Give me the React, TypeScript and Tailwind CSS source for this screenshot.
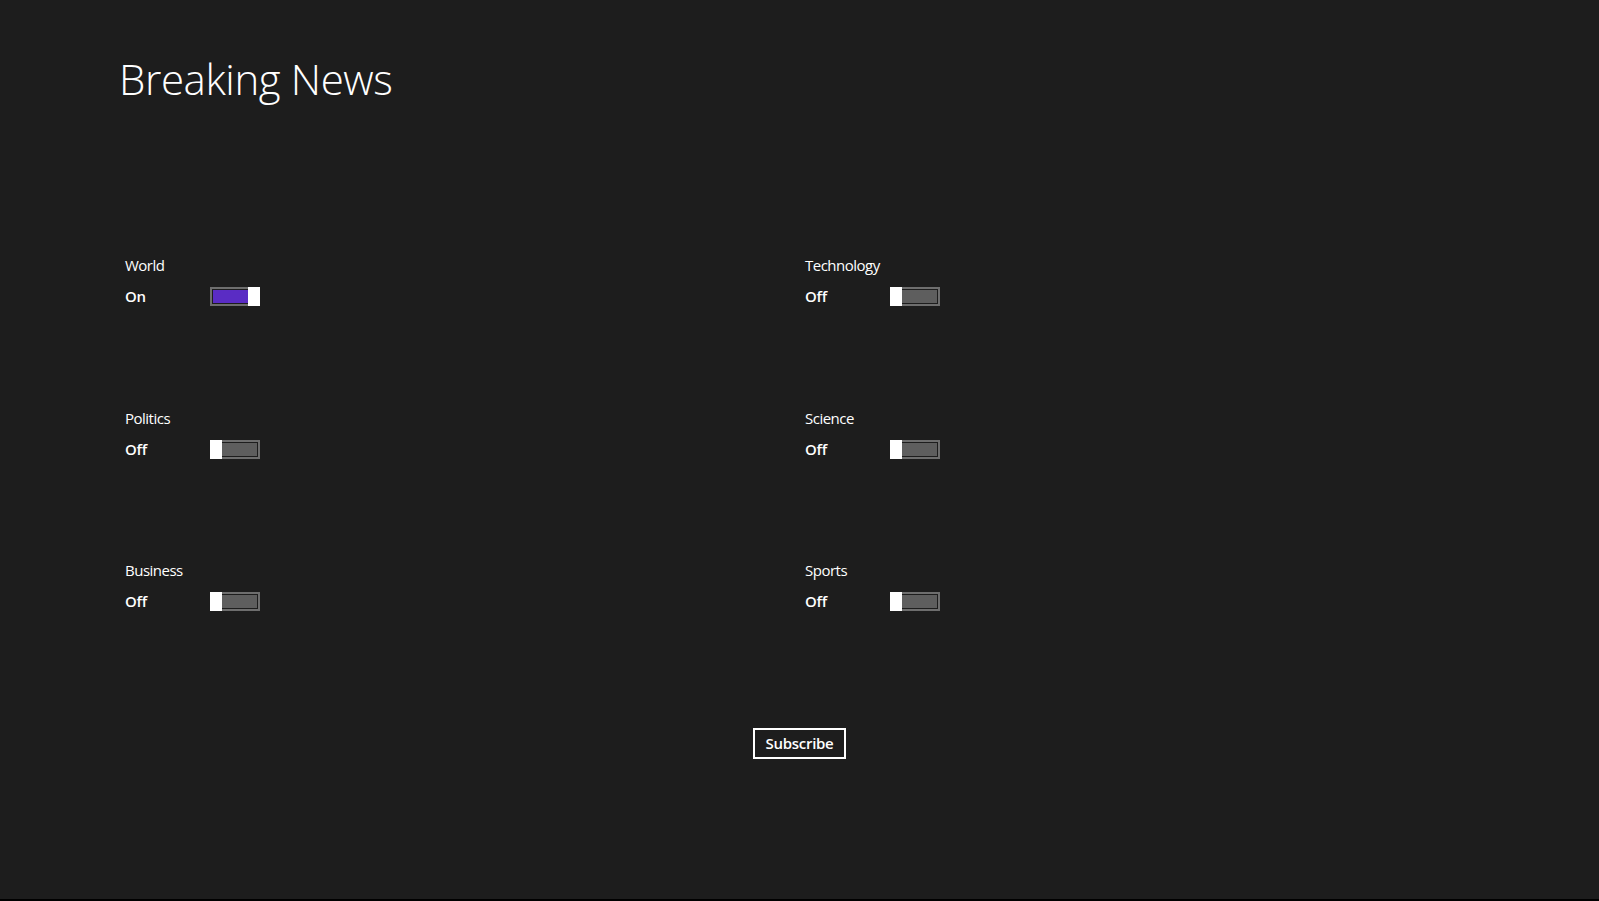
import React from "react";

const font = { fontFamily: '"Open Sans", "Noto Sans", sans-serif' };

function Toggle({ on }: { on: boolean }) {
  return (
    <div className="relative w-[50px] h-[19px] border-2 border-[#6e6e6e] p-px">
      <div className={on ? "w-full h-full bg-[#5a2cc4]" : "w-full h-full bg-[#5e5e5e]"} />
      <div className={on ? "absolute -top-[2px] -right-[2px] w-[12px] h-[19px] bg-white" : "absolute -top-[2px] -left-[2px] w-[12px] h-[19px] bg-white"} />
    </div>
  );
}

function Setting({ label, on }: { label: string; on: boolean }) {
  return (
    <div className="flex flex-col">
      <div className="text-[15px] leading-[20px] tracking-[-0.5px] text-white h-[20px]">{label}</div>
      <div className="flex items-center mt-[12px] h-[19px]">
        <span className="w-[85px] text-[15px] leading-[19px] tracking-[-0.3px] font-semibold text-white">{on ? "On" : "Off"}</span>
        <Toggle on={on} />
      </div>
    </div>
  );
}

export default function App() {
  return (
    <div className="w-[1599px] h-[901px] bg-black" style={font}>
      <div className="h-[899px] bg-[#1d1d1d] flex flex-col">
        <h1 className="pt-[58px] pl-[119px] text-[42px] leading-[42px] tracking-[-0.4px] font-[350] text-white">Breaking News</h1>
        <div className="mt-[155px] pl-[125px] grid grid-cols-[680px_1fr] gap-y-[102px]">
          <Setting label="World" on={true} />
          <Setting label="Technology" on={false} />
          <Setting label="Politics" on={false} />
          <Setting label="Science" on={false} />
          <div className="-mt-[1px]">
            <Setting label="Business" on={false} />
          </div>
          <div className="-mt-[1px]">
            <Setting label="Sports" on={false} />
          </div>
        </div>
        <div className="flex justify-center mt-[117px]">
          <button className="w-[93px] h-[31px] border-2 border-white text-white text-[15px] tracking-[-0.3px] font-semibold leading-[27px]">Subscribe</button>
        </div>
      </div>
    </div>
  );
}
